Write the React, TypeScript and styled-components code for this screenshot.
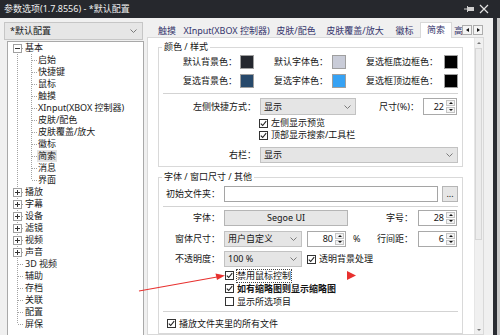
import React from "react";
import styled, { createGlobalStyle } from "styled-components";

const GlobalStyle = createGlobalStyle`
  html, body {
    margin: 0;
    padding: 0;
  }
  body {
    width: 500px;
    height: 335px;
    overflow: hidden;
    background: #26282d;
    font-family: "Noto Sans", "Noto Sans CJK SC", sans-serif;
    font-size: 9px;
    line-height: 12px;
    color: #141414;
  }
`;

const Screen = styled.div`
  position: relative;
  width: 500px;
  height: 335px;
  display: flex;
  flex-direction: column;
  overflow: hidden;
`;

const TitleBar = styled.div`
  height: 18px;
  flex: none;
  display: flex;
  align-items: center;
  justify-content: space-between;
  padding: 0 11px 0 4px;
  background: #26282d;
  color: #f0f0f0;
`;

const TitleControls = styled.div`
  display: flex;
  align-items: center;
  gap: 5px;
`;

const Frame = styled.div`
  flex: 1;
  display: flex;
  min-height: 0;
`;

const Body = styled.div`
  width: 493px;
  flex: none;
  display: flex;
  background: #f0f0f0;
`;

const Edge = styled.div`
  flex: 1;
  display: flex;
  background: #2b2d33;
  &::after {
    content: "";
    margin-left: auto;
    width: 3px;
    background: #c9c9c9;
  }
`;

/* left side */
const LeftPane = styled.div`
  width: 147px;
  flex: none;
  box-sizing: border-box;
  padding: 4px 0 0 4px;
  display: flex;
  flex-direction: column;
`;

const ProfileSelect = styled.div`
  width: 139px;
  height: 18px;
  box-sizing: border-box;
  border: 1px solid #c6c6c6;
  background: #e6e6e6;
  display: flex;
  align-items: center;
  justify-content: space-between;
  padding: 0 5px 0 5px;
`;

const Tree = styled.div`
  margin: 1px 0 0 3px;
  width: 137px;
  flex: 1;
  box-sizing: border-box;
  background: #fff;
  border: 1px solid #a9a9a9;
  border-bottom: none;
  overflow: hidden;
`;

const TreeRow = styled.div`
  height: 12px;
  display: flex;
  align-items: center;
  white-space: nowrap;
  svg {
    flex: none;
  }
`;

const TreeLabel = styled.span<{ $active?: boolean }>`
  padding: 0 1px;
  background: ${(p) => (p.$active ? "#e3e3e3" : "transparent")};
  color: #1a1a1a;
`;

/* right side */
const RightPane = styled.div`
  width: 337px;
  flex: none;
  box-sizing: border-box;
  padding-top: 2px;
  display: flex;
  flex-direction: column;
`;

const TabStrip = styled.div`
  height: 17px;
  flex: none;
  display: flex;
  align-items: flex-end;
  padding-left: 5px;
`;

const TabsViewport = styled.div`
  flex: 1;
  display: flex;
  align-items: flex-end;
  overflow: hidden;
  height: 18px;
  margin-bottom: -1px;
`;

const Tab = styled.div<{ $w: number; $active?: boolean; $partial?: boolean }>`
  width: ${(p) => p.$w}px;
  flex: none;
  box-sizing: border-box;
  height: ${(p) => (p.$active ? 16 : 15)}px;
  line-height: ${(p) => (p.$active ? 14 : 13)}px;
  text-align: ${(p) => (p.$partial ? "left" : "center")};
  padding-left: ${(p) => (p.$partial ? 1 : 0)}px;
  white-space: nowrap;
  color: #34346c;
  position: relative;
  z-index: 1;
  background: ${(p) => (p.$active ? "#fff" : "transparent")};
  border: 1px solid ${(p) => (p.$active ? "#d9d9d9" : "transparent")};
  border-bottom: none;
`;

const TabArrows = styled.div`
  display: flex;
  margin: 0 1px 2px 0;
`;

const TabArrow = styled.div<{ $dir: "left" | "right" }>`
  width: 10px;
  height: 10px;
  box-sizing: border-box;
  border: 1px solid #adadad;
  background: #f4f4f4;
  display: flex;
  align-items: center;
  justify-content: center;
  & + & {
    margin-left: 1px;
  }
  &::after {
    content: "";
    border-top: 2.5px solid transparent;
    border-bottom: 2.5px solid transparent;
    ${(p) => (p.$dir === "left" ? "border-right: 3px solid #111;" : "border-left: 3px solid #111;")}
  }
`;

const Panel = styled.div`
  flex: 1;
  display: flex;
  background: #fff;
  border: 1px solid #d9d9d9;
  min-height: 0;
  overflow: hidden;
`;

const PanelContent = styled.div`
  flex: 1;
  min-width: 0;
  padding-top: 3px;
`;

const ScrollBar = styled.div`
  width: 8px;
  flex: none;
  display: flex;
  flex-direction: column;
  background: #f0f0f0;
  border-left: 1px solid #e6e6e6;
`;

const ScrollStep = styled.div<{ $dir: "up" | "down" }>`
  height: 9px;
  flex: none;
  display: flex;
  align-items: center;
  justify-content: center;
  margin-top: ${(p) => (p.$dir === "down" ? "auto" : "0")};
  &::after {
    content: "";
    border-left: 2px solid transparent;
    border-right: 2px solid transparent;
    ${(p) => (p.$dir === "up" ? "border-bottom: 2px solid #777;" : "border-top: 2px solid #777;")}
  }
`;

const ScrollThumb = styled.div`
  height: 190px;
  margin: 1px 1px 0 0;
  background: #ececec;
  border: 1px solid #d6d6d6;
`;

const Group = styled.fieldset<{ $mt: number }>`
  margin: ${(p) => p.$mt}px 11px 0 10px;
  padding: 0 0 3px 0;
  min-width: 0;
  border: 1px solid #d9d9d9;
  legend {
    margin-left: 3px;
    padding: 0 2px;
    line-height: 12px;
  }
`;

const ColorGrid = styled.div`
  display: grid;
  grid-template-columns: 78px 17px 74px 18px 92px 20px;
  grid-auto-rows: 14px;
  row-gap: 5px;
  align-items: center;
  margin-top: 2px;
`;

const ColorLabel = styled.span`
  text-align: right;
  white-space: nowrap;
`;

const Swatch = styled.span<{ $color: string }>`
  justify-self: end;
  width: 14px;
  height: 14px;
  box-sizing: border-box;
  border: 1px solid #9f9f9f;
  background: ${(p) => p.$color};
`;

const Divider = styled.div<{ $mt: number }>`
  height: 1px;
  margin: ${(p) => p.$mt}px 4px 0 4px;
  background: #d3d3d3;
`;

const FormRow = styled.div<{ $mt: number; $h?: number }>`
  display: flex;
  align-items: center;
  height: ${(p) => p.$h ?? 16}px;
  margin-top: ${(p) => p.$mt}px;
  padding-right: 5px;
  white-space: nowrap;
`;

const FieldLabel = styled.span<{ $w: number }>`
  width: ${(p) => p.$w}px;
  flex: none;
  box-sizing: border-box;
  padding-right: 4px;
  text-align: right;
`;

const SideLabel = styled.span<{ $mr: number }>`
  margin-left: auto;
  margin-right: ${(p) => p.$mr}px;
`;

const Unit = styled.span`
  margin-left: 7px;
`;

const SelectBox = styled.div<{ $w: number; $h?: number }>`
  width: ${(p) => p.$w}px;
  height: ${(p) => p.$h ?? 16}px;
  flex: none;
  box-sizing: border-box;
  border: 1px solid #c2c2c2;
  background: #e5e5e5;
  display: flex;
  align-items: center;
  justify-content: space-between;
  padding: 0 4px 0 3px;
`;

const TextInput = styled.div<{ $w: number }>`
  width: ${(p) => p.$w}px;
  height: 16px;
  flex: none;
  box-sizing: border-box;
  border: 1px solid #a5a5a5;
  background: #fff;
`;

const PushButton = styled.div<{ $w: number; $ml?: number }>`
  width: ${(p) => p.$w}px;
  height: 16px;
  flex: none;
  margin-left: ${(p) => p.$ml ?? 0}px;
  box-sizing: border-box;
  border: 1px solid #b5b5b5;
  background: #e6e6e6;
  display: flex;
  align-items: center;
  justify-content: center;
  line-height: 12px;
`;

const SpinBox = styled.div<{ $w: number; $h: number; $ml?: number }>`
  width: ${(p) => p.$w}px;
  height: ${(p) => p.$h}px;
  margin-left: ${(p) => p.$ml ?? 0}px;
  flex: none;
  box-sizing: border-box;
  border: 1px solid #a9a9a9;
  background: #fff;
  display: flex;
`;

const SpinValue = styled.span`
  flex: 1;
  text-align: right;
  padding-right: 2px;
  align-self: center;
`;

const SpinButtons = styled.div`
  width: 9px;
  flex: none;
  display: flex;
  flex-direction: column;
  gap: 1px;
  padding: 1px 1px 1px 0;
`;

const SpinStep = styled.div<{ $up?: boolean }>`
  flex: 1;
  box-sizing: border-box;
  border: 1px solid #c4c4c4;
  background: #f3f3f3;
  display: flex;
  align-items: center;
  justify-content: center;
  &::after {
    content: "";
    border-left: 2px solid transparent;
    border-right: 2px solid transparent;
    ${(p) => (p.$up ? "border-bottom: 2px solid #111;" : "border-top: 2px solid #111;")}
  }
`;

const CheckRow = styled.div<{ $ml: number; $mt?: number; $h?: number }>`
  display: flex;
  align-items: center;
  gap: 3px;
  height: ${(p) => p.$h ?? 12}px;
  margin-left: ${(p) => p.$ml}px;
  margin-top: ${(p) => p.$mt ?? 0}px;
  white-space: nowrap;
`;

const InlineCheck = styled.div`
  display: flex;
  align-items: center;
  gap: 3px;
  margin-left: 5px;
`;

const Box = styled.span`
  width: 9px;
  height: 9px;
  flex: none;
  box-sizing: border-box;
  border: 1px solid #333;
  background: #fff;
  display: flex;
  align-items: center;
  justify-content: center;
`;

const CheckText = styled.span<{ $bold?: boolean; $focus?: boolean }>`
  font-weight: ${(p) => (p.$bold ? 700 : 400)};
  outline: ${(p) => (p.$focus ? "1px dotted #444" : "none")};
  outline-offset: 0;
`;

const Annotation = styled.svg`
  position: absolute;
  left: 0;
  top: 0;
  pointer-events: none;
`;

type TreeNode = {
  label: string;
  level: 0 | 1;
  expander?: "open" | "closed";
  first?: boolean;
  last?: boolean;
  active?: boolean;
};

const treeNodes: TreeNode[] = [
  { label: "基本", level: 0, expander: "open", first: true },
  { label: "启始", level: 1 },
  { label: "快捷键", level: 1 },
  { label: "鼠标", level: 1 },
  { label: "触摸", level: 1 },
  { label: "XInput(XBOX 控制器)", level: 1 },
  { label: "皮肤/配色", level: 1 },
  { label: "皮肤覆盖/放大", level: 1 },
  { label: "徽标", level: 1 },
  { label: "简索", level: 1, active: true },
  { label: "消息", level: 1 },
  { label: "界面", level: 1, last: true },
  { label: "播放", level: 0, expander: "closed" },
  { label: "字幕", level: 0, expander: "closed" },
  { label: "设备", level: 0, expander: "closed" },
  { label: "滤镜", level: 0, expander: "closed" },
  { label: "视频", level: 0, expander: "closed" },
  { label: "声音", level: 0, expander: "closed" },
  { label: "3D 视频", level: 0 },
  { label: "辅助", level: 0 },
  { label: "存档", level: 0 },
  { label: "关联", level: 0 },
  { label: "配置", level: 0 },
  { label: "屏保", level: 0, last: true },
];

const tabs = [
  { label: "触摸", w: 30 },
  { label: "XInput(XBOX 控制器)", w: 89 },
  { label: "皮肤/配色", w: 50 },
  { label: "皮肤覆盖/放大", w: 68 },
  { label: "徽标", w: 31 },
  { label: "简索", w: 32, active: true },
  { label: "高", w: 11, partial: true },
];

const colorItems = [
  { label: "默认背景色：", color: "#24272e" },
  { label: "默认字体色：", color: "#c9ccd8" },
  { label: "复选框底边框色：", color: "#000000" },
  { label: "复选背景色：", color: "#27496b" },
  { label: "复选字体色：", color: "#36a2f4" },
  { label: "复选框顶边框色：", color: "#000000" },
];

const dotted = { stroke: "#a3a3a3", strokeWidth: 1, strokeDasharray: "1 1" };

const Connector: React.FC<{ node: TreeNode }> = ({ node }) => {
  const width = node.level === 0 ? 16 : 29;
  return (
    <svg width={width} height={12} viewBox={`0 0 ${width} 12`}>
      {node.level === 0 ? (
        <>
          {!node.first && <line x1={9.5} y1={0} x2={9.5} y2={6} {...dotted} />}
          {!node.last && <line x1={9.5} y1={6} x2={9.5} y2={12} {...dotted} />}
          <line x1={10} y1={6.5} x2={15} y2={6.5} {...dotted} />
          {node.expander && (
            <g>
              <rect x={5.5} y={2.5} width={8} height={8} fill="#fff" stroke="#a0a0a0" />
              <line x1={7} y1={6.5} x2={12} y2={6.5} stroke="#333" />
              {node.expander === "closed" && (
                <line x1={9.5} y1={4} x2={9.5} y2={9} stroke="#333" />
              )}
            </g>
          )}
        </>
      ) : (
        <>
          <line x1={9.5} y1={0} x2={9.5} y2={12} {...dotted} />
          <line x1={23.5} y1={0} x2={23.5} y2={node.last ? 6 : 12} {...dotted} />
          <line x1={24} y1={6.5} x2={29} y2={6.5} {...dotted} />
        </>
      )}
    </svg>
  );
};

const Chevron = () => (
  <svg width={7} height={4} viewBox="0 0 7 4">
    <polyline points="0.5,0.5 3.5,3.5 6.5,0.5" fill="none" stroke="#7a7a7a" />
  </svg>
);

const Select: React.FC<{ w: number; h?: number; value: string }> = ({ w, h, value }) => (
  <SelectBox $w={w} $h={h}>
    <span>{value}</span>
    <Chevron />
  </SelectBox>
);

const Spin: React.FC<{ w: number; h?: number; ml?: number; value: string }> = ({ w, h = 16, ml, value }) => (
  <SpinBox $w={w} $h={h} $ml={ml}>
    <SpinValue>{value}</SpinValue>
    <SpinButtons>
      <SpinStep $up />
      <SpinStep />
    </SpinButtons>
  </SpinBox>
);

const Check: React.FC<{ checked?: boolean }> = ({ checked }) => (
  <Box>
    {checked && (
      <svg width={7} height={7} viewBox="0 0 7 7">
        <polyline points="0.8,3.6 2.7,5.5 6.2,1.2" fill="none" stroke="#222" strokeWidth={1.1} />
      </svg>
    )}
  </Box>
);

export default function App() {
  return (
    <Screen>
      <GlobalStyle />
      <TitleBar>
        <span>参数选项(1.7.8556) - *默认配置</span>
        <TitleControls>
          <svg width={10} height={8} viewBox="0 0 10 8">
            <line x1={0} y1={4} x2={3} y2={4} stroke="#cfcfcf" />
            <line x1={3.5} y1={1} x2={3.5} y2={7} stroke="#cfcfcf" />
            <rect x={4} y={2} width={6} height={4} fill="#cfcfcf" />
          </svg>
          <svg width={10} height={10} viewBox="0 0 10 10">
            <path d="M1 1 L9 9 M9 1 L1 9" stroke="#e2e2e2" strokeWidth={1.2} />
          </svg>
        </TitleControls>
      </TitleBar>

      <Frame>
        <Body>
          <LeftPane>
            <ProfileSelect>
              <span>*默认配置</span>
              <Chevron />
            </ProfileSelect>
            <Tree>
              {treeNodes.map((node) => (
                <TreeRow key={node.label}>
                  <Connector node={node} />
                  <TreeLabel $active={node.active}>{node.label}</TreeLabel>
                </TreeRow>
              ))}
            </Tree>
          </LeftPane>

          <RightPane>
            <TabStrip>
              <TabsViewport>
                {tabs.map((tab) => (
                  <Tab key={tab.label} $w={tab.w} $active={tab.active} $partial={tab.partial}>
                    {tab.label}
                  </Tab>
                ))}
              </TabsViewport>
              <TabArrows>
                <TabArrow $dir="left" />
                <TabArrow $dir="right" />
              </TabArrows>
            </TabStrip>

            <Panel>
              <PanelContent>
                <Group $mt={0}>
                  <legend>颜色 / 样式</legend>
                  <ColorGrid>
                    {colorItems.map((item) => (
                      <React.Fragment key={item.label}>
                        <ColorLabel>{item.label}</ColorLabel>
                        <Swatch $color={item.color} />
                      </React.Fragment>
                    ))}
                  </ColorGrid>
                  <Divider $mt={5} />
                  <FormRow $mt={4} $h={17}>
                    <FieldLabel $w={101}>左侧快捷方式：</FieldLabel>
                    <Select w={96} h={17} value="显示" />
                    <SideLabel $mr={4}>尺寸(%)：</SideLabel>
                    <Spin w={34} h={17} value="22" />
                  </FormRow>
                  <CheckRow $ml={100} $mt={2}>
                    <Check checked />
                    <span>左侧显示预览</span>
                  </CheckRow>
                  <CheckRow $ml={100}>
                    <Check checked />
                    <span>顶部显示搜索/工具栏</span>
                  </CheckRow>
                  <FormRow $mt={6}>
                    <FieldLabel $w={101}>右栏：</FieldLabel>
                    <Select w={198} value="显示" />
                  </FormRow>
                </Group>

                <Group $mt={4}>
                  <legend>字体 / 窗口尺寸 / 其他</legend>
                  <FormRow $mt={3}>
                    <FieldLabel $w={65}>初始文件夹：</FieldLabel>
                    <TextInput $w={214} />
                    <PushButton $w={16} $ml={4}>...</PushButton>
                  </FormRow>
                  <Divider $mt={4} />
                  <FormRow $mt={3}>
                    <FieldLabel $w={65}>字体：</FieldLabel>
                    <PushButton $w={124}>Segoe UI</PushButton>
                    <SideLabel $mr={5}>字号：</SideLabel>
                    <Spin w={39} value="28" />
                  </FormRow>
                  <FormRow $mt={5}>
                    <FieldLabel $w={65}>窗体尺寸：</FieldLabel>
                    <Select w={78} value="用户自定义" />
                    <Spin w={39} ml={5} value="80" />
                    <Unit>%</Unit>
                    <SideLabel $mr={5}>行间距：</SideLabel>
                    <Spin w={39} value="6" />
                  </FormRow>
                  <FormRow $mt={4}>
                    <FieldLabel $w={65}>不透明度：</FieldLabel>
                    <Select w={78} value="100 %" />
                    <InlineCheck>
                      <Check checked />
                      <span>透明背景处理</span>
                    </InlineCheck>
                  </FormRow>
                  <CheckRow $ml={66} $mt={2} $h={13}>
                    <Check checked />
                    <CheckText $focus>禁用鼠标控制</CheckText>
                  </CheckRow>
                  <CheckRow $ml={66} $h={13}>
                    <Check checked />
                    <CheckText $bold>如有缩略图则显示缩略图</CheckText>
                  </CheckRow>
                  <CheckRow $ml={66} $h={13}>
                    <Check />
                    <CheckText>显示所选项目</CheckText>
                  </CheckRow>
                  <Divider $mt={3} />
                  <CheckRow $ml={8} $mt={5} $h={13}>
                    <Check checked />
                    <CheckText>播放文件夹里的所有文件</CheckText>
                  </CheckRow>
                </Group>
              </PanelContent>
              <ScrollBar>
                <ScrollStep $dir="up" />
                <ScrollThumb />
                <ScrollStep $dir="down" />
              </ScrollBar>
            </Panel>
          </RightPane>
        </Body>
        <Edge />
      </Frame>

      <Annotation width={500} height={335} viewBox="0 0 500 335">
        <line x1={139} y1={291} x2={217} y2={277} stroke="#e8312f" strokeWidth={1.2} />
        <polygon points="225,275.5 215.5,273.5 217,280" fill="#e8312f" />
        <polygon points="347,271 356,275.5 347,280" fill="#e8312f" />
      </Annotation>
    </Screen>
  );
}
